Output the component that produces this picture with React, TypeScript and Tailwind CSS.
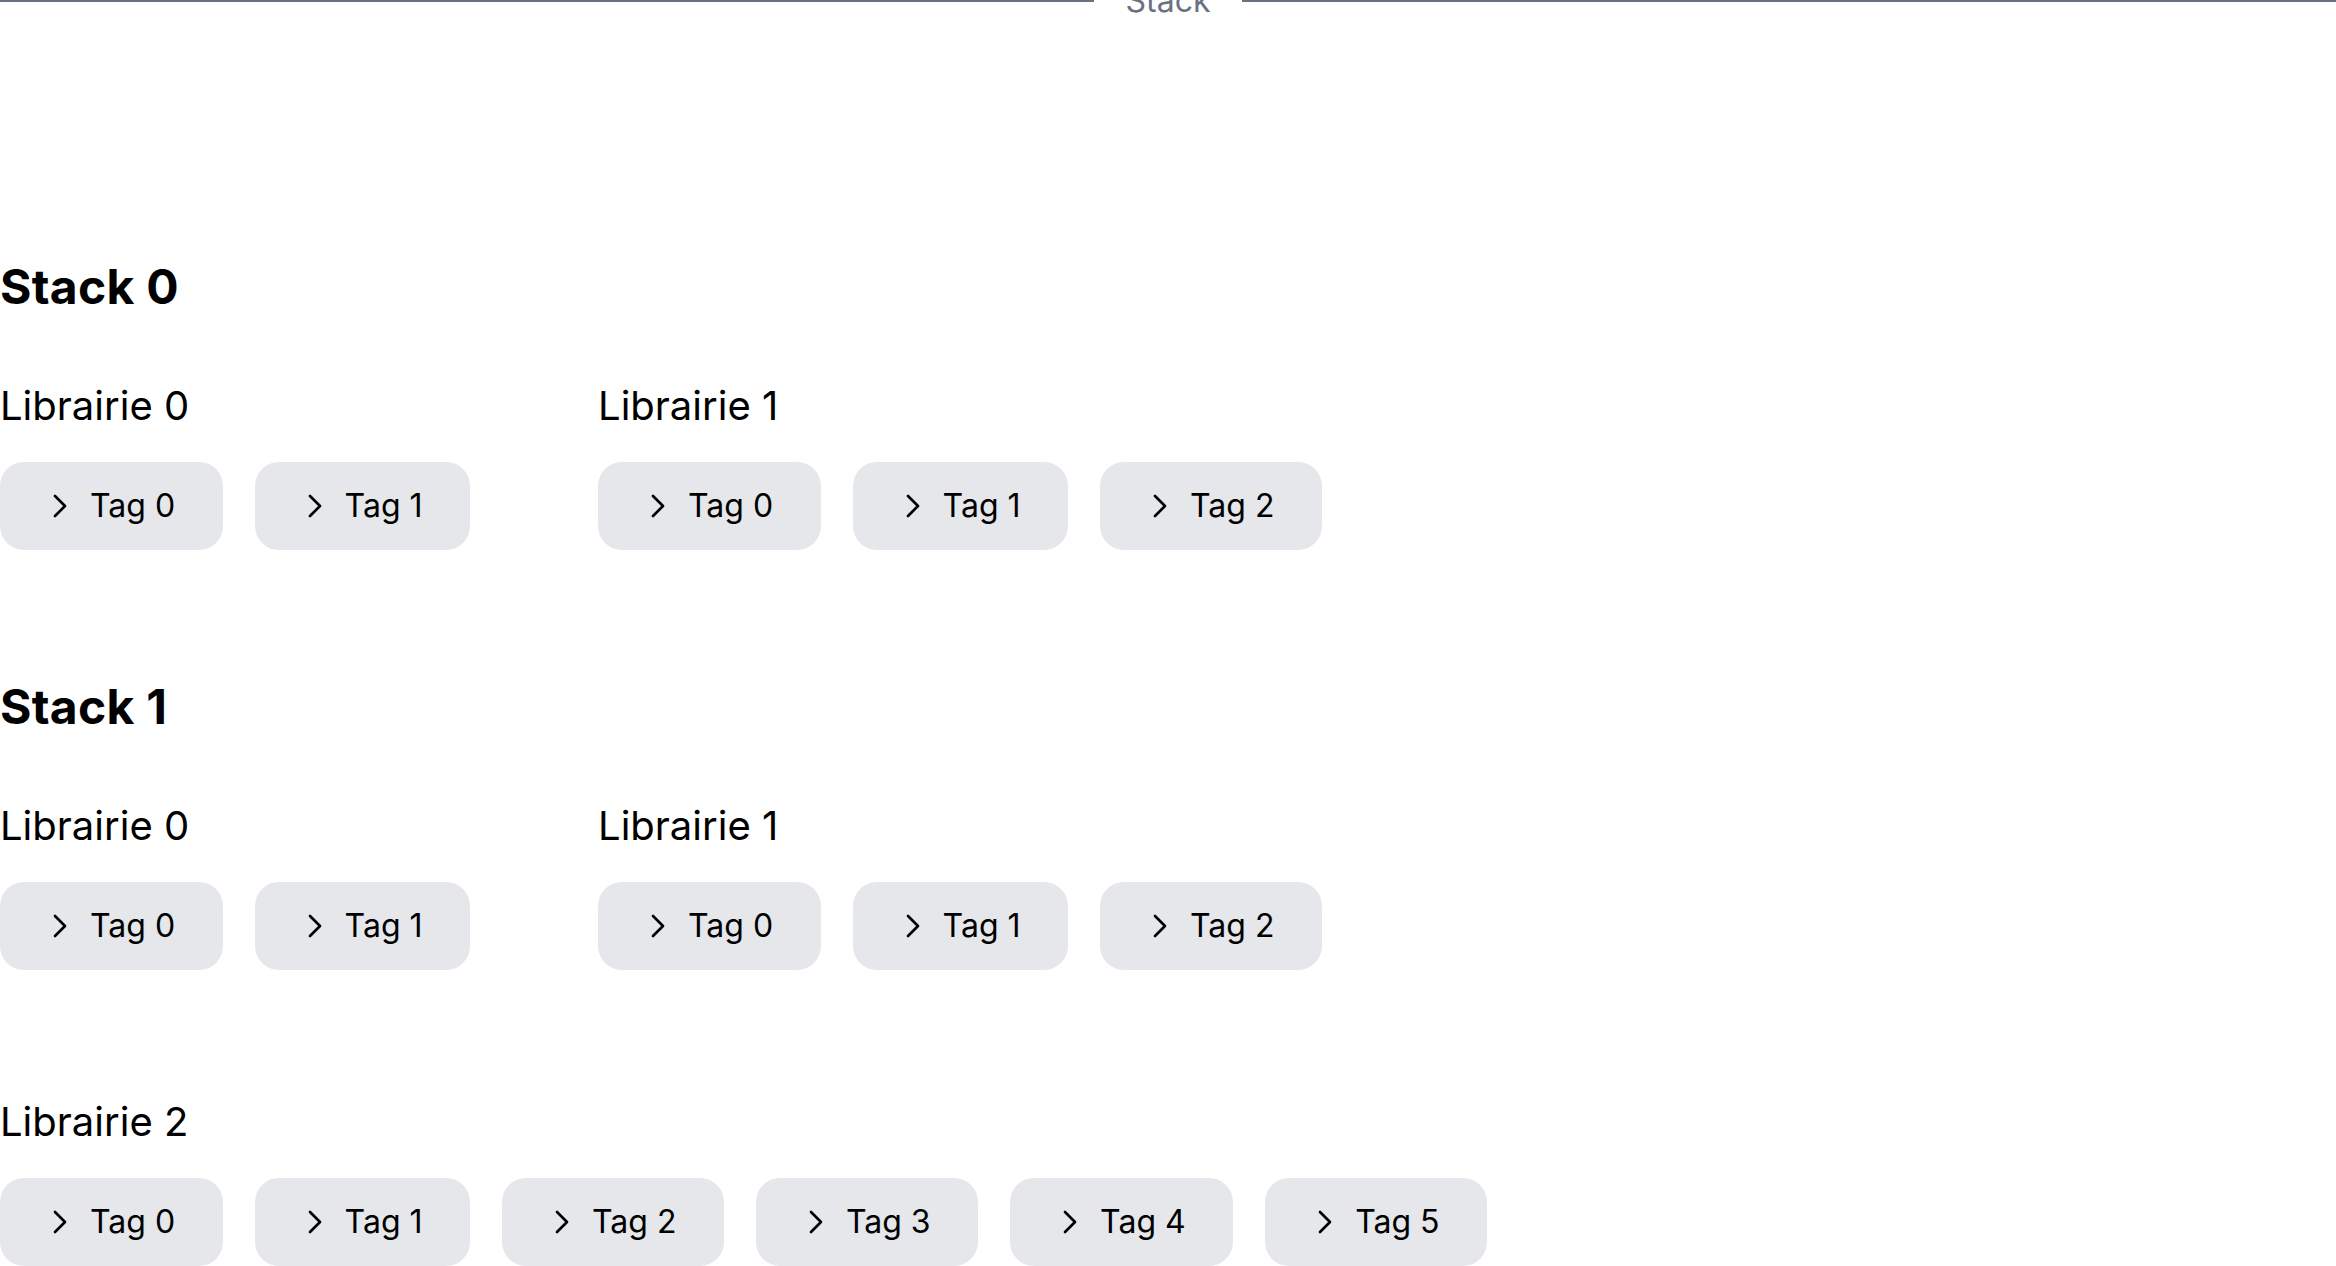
import React from "react";

type Lib = { name: string; tags: number };
type Stack = { name: string; libs: Lib[] };

const stacks: Stack[] = [
  {
    name: "Stack 0",
    libs: [
      { name: "Librairie 0", tags: 2 },
      { name: "Librairie 1", tags: 3 },
    ],
  },
  {
    name: "Stack 1",
    libs: [
      { name: "Librairie 0", tags: 2 },
      { name: "Librairie 1", tags: 3 },
      { name: "Librairie 2", tags: 6 },
    ],
  },
];

function Chevron() {
  return (
    <svg
      viewBox="0 0 24 24"
      fill="none"
      stroke="currentColor"
      strokeWidth={2}
      strokeLinecap="round"
      strokeLinejoin="round"
      className="h-8 w-8 shrink-0"
    >
      <path d="m8.25 4.5 7.5 7.5-7.5 7.5" />
    </svg>
  );
}

function Tag({ label }: { label: string }) {
  return (
    <div className="flex h-[88px] items-center gap-[14px] rounded-[24px] bg-gray-200 pl-[44px] pr-[47.5px] text-[32px] leading-[48px] text-black">
      <Chevron />
      <span>{label}</span>
    </div>
  );
}

export default function App() {
  return (
    <div className="min-h-screen overflow-hidden bg-white font-['Inter',sans-serif] text-black">
      <div className="-mt-[23px] flex items-center">
        <div className="h-[2px] flex-1 bg-gray-500" />
        <span className="px-8 text-[32px] leading-[48px] text-gray-500">Stack</span>
        <div className="h-[2px] flex-1 bg-gray-500" />
      </div>
      <div className="mt-[232px] flex flex-col gap-[127px]">
        {stacks.map((s) => (
          <section key={s.name}>
            <h2 className="text-[48px] font-bold leading-[60px] tracking-[0.3px]">{s.name}</h2>
            <div className="mt-[65px] flex flex-wrap gap-[128px]">
              {s.libs.map((l) => (
                <div key={l.name}>
                  <h3 className="text-[40px] leading-[48px]">{l.name}</h3>
                  <div className="mt-[32px] flex gap-8">
                    {Array.from({ length: l.tags }).map((_, i) => (
                      <Tag key={i} label={`Tag ${i}`} />
                    ))}
                  </div>
                </div>
              ))}
            </div>
          </section>
        ))}
      </div>
    </div>
  );
}
